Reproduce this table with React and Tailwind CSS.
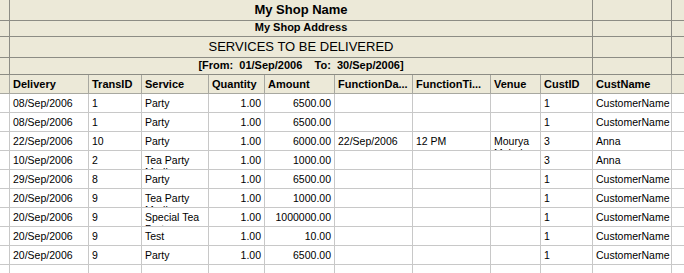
const columns = [
  { key: "delivery", label: "Delivery" },
  { key: "transId", label: "TransID" },
  { key: "service", label: "Service" },
  { key: "quantity", label: "Quantity", right: true },
  { key: "amount", label: "Amount", right: true },
  { key: "funcDate", label: "FunctionDa..." },
  { key: "funcTime", label: "FunctionTi..." },
  { key: "venue", label: "Venue" },
  { key: "custId", label: "CustID" },
  { key: "custName", label: "CustName" },
];

const rows = [
  { delivery: "08/Sep/2006", transId: "1", service: "Party", quantity: "1.00", amount: "6500.00", custId: "1", custName: "CustomerName" },
  { delivery: "08/Sep/2006", transId: "1", service: "Party", quantity: "1.00", amount: "6500.00", custId: "1", custName: "CustomerName" },
  { delivery: "22/Sep/2006", transId: "10", service: "Party", quantity: "1.00", amount: "6000.00", funcDate: "22/Sep/2006", funcTime: "12 PM", venue: "Mourya Mahal", custId: "3", custName: "Anna" },
  { delivery: "10/Sep/2006", transId: "2", service: "Tea Party Medium", quantity: "1.00", amount: "1000.00", custId: "3", custName: "Anna" },
  { delivery: "29/Sep/2006", transId: "8", service: "Party", quantity: "1.00", amount: "6500.00", custId: "1", custName: "CustomerName" },
  { delivery: "20/Sep/2006", transId: "9", service: "Tea Party Medium", quantity: "1.00", amount: "1000.00", custId: "1", custName: "CustomerName" },
  { delivery: "20/Sep/2006", transId: "9", service: "Special Tea Party", quantity: "1.00", amount: "1000000.00", custId: "1", custName: "CustomerName" },
  { delivery: "20/Sep/2006", transId: "9", service: "Test", quantity: "1.00", amount: "10.00", custId: "1", custName: "CustomerName" },
  { delivery: "20/Sep/2006", transId: "9", service: "Party", quantity: "1.00", amount: "6500.00", custId: "1", custName: "CustomerName" },
  {},
];

// widths line up with the grid lines of the original report
const gridCols =
  "grid grid-cols-[10px_79px_53px_67px_56px_70px_78px_78px_50px_52px_79px_12px]";

const TitleRow = ({ children, tall, className }) => (
  <div className={`${gridCols} ${tall ? "h-[18px]" : "h-[19px]"} bg-[#ECE9D8]`}>
    <div className="border-r border-b border-[#8c8c84]"></div>
    <div
      className={`col-span-9 border-r border-b border-[#8c8c84] flex items-center justify-center whitespace-pre text-black ${className}`}
    >
      {children}
    </div>
    <div className="border-r border-b border-[#8c8c84]"></div>
    <div className="border-b border-[#8c8c84]"></div>
  </div>
);

const App = () => {
  return (
    <div className="w-[684px] h-[273px] overflow-hidden bg-white font-['Liberation_Sans',Arial,sans-serif]">
      {/* Report title */}
      <TitleRow tall className="text-[13px] font-bold">
        My Shop Name
      </TitleRow>
      <TitleRow className="text-[11px] font-bold">My Shop Address</TitleRow>
      <TitleRow className="text-[13px]">SERVICES TO BE DELIVERED</TitleRow>
      <TitleRow className="text-[11px] font-bold">
        {"[From:  01/Sep/2006    To:  30/Sep/2006]"}
      </TitleRow>

      {/* Column headers */}
      <div className={`${gridCols} h-[19px] bg-[#ECE9D8]`}>
        <div className="border-r border-b border-[#a8a8a0]"></div>
        {columns.map((col) => (
          <div
            key={col.key}
            className="border-r border-b border-[#a8a8a0] px-[3px] flex items-center text-[11px] font-bold text-black whitespace-nowrap overflow-hidden"
          >
            {col.label}
          </div>
        ))}
        <div className="border-b border-[#a8a8a0]"></div>
      </div>

      {/* Data rows */}
      {rows.map((row, index) => (
        <div key={index} className={`${gridCols} h-[19px]`}>
          <div className="border-r border-b border-[#c8c8c8]"></div>
          {columns.map((col) => (
            <div
              key={col.key}
              className={`border-r border-b border-[#c8c8c8] px-[3px] pt-[3px] text-[10.5px] leading-[12px] text-black overflow-hidden ${
                col.right ? "text-right" : ""
              }`}
            >
              {row[col.key] || ""}
            </div>
          ))}
          <div className="border-b border-[#c8c8c8]"></div>
        </div>
      ))}
    </div>
  );
};

export default App;
